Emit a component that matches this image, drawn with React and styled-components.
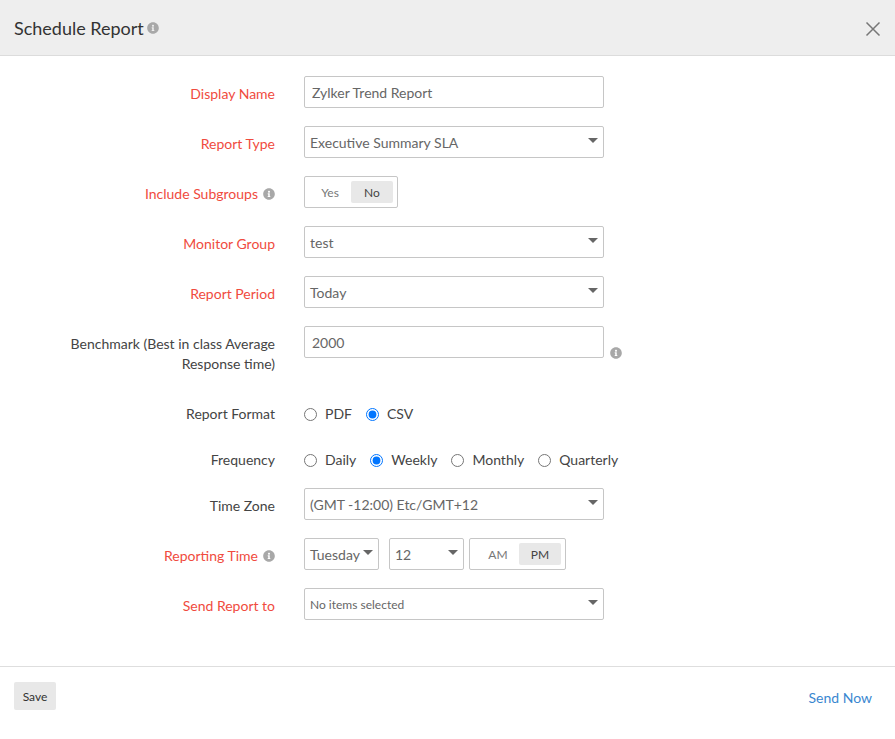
import React from "react";
import styled, { createGlobalStyle } from "styled-components";
import { FaInfoCircle } from "react-icons/fa";

const GlobalStyle = createGlobalStyle`
  html, body {
    margin: 0;
    padding: 0;
    background: #fff;
    font-family: "Lato", "Liberation Sans", sans-serif;
  }
`;

const Info = ({ gap }) => (
  <InfoIcon $gap={gap}>
    <FaInfoCircle size={12} />
  </InfoIcon>
);

const Select = ({ value, width, small }) => (
  <SelectBox $width={width} $small={small}>
    <span>{value}</span>
    <Caret />
  </SelectBox>
);

const Toggle = ({ options, active, width }) => (
  <ToggleBox $width={width}>
    {options.map((option) => (
      <ToggleOption key={option} $active={option === active}>
        {option}
      </ToggleOption>
    ))}
  </ToggleBox>
);

const Radios = ({ name, options, checked }) => (
  <RadioGroup>
    {options.map((option) => (
      <RadioLabel key={option}>
        <RadioInput
          type="radio"
          name={name}
          defaultChecked={option === checked}
        />
        {option}
      </RadioLabel>
    ))}
  </RadioGroup>
);

export default function App() {
  return (
    <Dialog>
      <GlobalStyle />
      <Header>
        <Title>
          Schedule Report
          <Info gap={3} />
        </Title>
        <CloseIcon viewBox="0 0 16 16">
          <path d="M1.5 1.5L14.5 14.5M14.5 1.5L1.5 14.5" />
        </CloseIcon>
      </Header>

      <Body>
        <Row>
          <Label $required>Display Name</Label>
          <TextInput defaultValue="Zylker Trend Report" />
        </Row>
        <Row>
          <Label $required>Report Type</Label>
          <Select value="Executive Summary SLA" />
        </Row>
        <Row>
          <Label $required>
            Include Subgroups
            <Info gap={5} />
          </Label>
          <Toggle options={["Yes", "No"]} active="No" width={94} />
        </Row>
        <Row>
          <Label $required>Monitor Group</Label>
          <Select value="test" />
        </Row>
        <Row>
          <Label $required>Report Period</Label>
          <Select value="Today" />
        </Row>
        <Row>
          <Label $tall>Benchmark (Best in class Average Response time)</Label>
          <TextInput defaultValue="2000" />
          <Info gap={6} />
        </Row>
        <Row>
          <Label>Report Format</Label>
          <Radios name="format" options={["PDF", "CSV"]} checked="CSV" />
        </Row>
        <Row>
          <Label>Frequency</Label>
          <Radios
            name="frequency"
            options={["Daily", "Weekly", "Monthly", "Quarterly"]}
            checked="Weekly"
          />
        </Row>
        <Row>
          <Label>Time Zone</Label>
          <Select value="(GMT -12:00) Etc/GMT+12" />
        </Row>
        <Row>
          <Label $required>
            Reporting Time
            <Info gap={5} />
          </Label>
          <Select value="Tuesday" width={75} />
          <Spacer $width={10} />
          <Select value="12" width={75} />
          <Spacer $width={5} />
          <Toggle options={["AM", "PM"]} active="PM" width={97} />
        </Row>
        <Row>
          <Label $required>Send Report to</Label>
          <Select value="No items selected" small />
        </Row>
      </Body>

      <Footer>
        <SaveButton>Save</SaveButton>
        <SendNow href="#">Send Now</SendNow>
      </Footer>
    </Dialog>
  );
}

const Dialog = styled.div`
  width: 895px;
  height: 739px;
  display: flex;
  flex-direction: column;
  overflow: hidden;
  background: #fff;
  color: #444;
  font-size: 14px;
`;

const Header = styled.div`
  height: 55px;
  flex-shrink: 0;
  display: flex;
  align-items: center;
  justify-content: space-between;
  padding: 0 14px;
  background: #eeeeee;
  border-bottom: 1px solid #dcdcdc;
`;

const Title = styled.div`
  display: flex;
  align-items: center;
  font-size: 18px;
  color: #333;
`;

const CloseIcon = styled.svg`
  width: 16px;
  height: 16px;
  margin-top: 2px;
  fill: none;
  stroke: #777;
  stroke-width: 1.5;
`;

const InfoIcon = styled.span`
  display: inline-flex;
  margin-left: ${(props) => props.$gap}px;
  color: #a8a8a8;
  align-self: center;
`;

const Body = styled.div`
  flex: 1;
  padding-top: 20px;
`;

const Row = styled.div`
  display: flex;
  align-items: ${(props) => props.$align || "flex-start"};
  margin-bottom: 18px;

  > ${InfoIcon} {
    align-self: center;
    margin-top: 2px;
  }
`;

const Label = styled.div`
  box-sizing: border-box;
  width: 275px;
  flex-shrink: 0;
  margin-right: 29px;
  padding: 8px 0 ${(props) => (props.$tall ? "4px" : "0")} 60px;
  display: flex;
  justify-content: flex-end;
  align-items: center;
  min-height: 28px;
  line-height: 20px;
  text-align: right;
  color: ${(props) => (props.$required ? "#f04b3e" : "#444")};
`;

const TextInput = styled.input`
  box-sizing: border-box;
  width: 300px;
  height: 32px;
  padding: 0 7px;
  border: 1px solid #c6c6c6;
  border-radius: 2px;
  outline: none;
  font-family: inherit;
  font-size: 14px;
  color: #666;
`;

const SelectBox = styled.div`
  box-sizing: border-box;
  width: ${(props) => props.$width || 300}px;
  height: 32px;
  padding: 0 5px;
  display: flex;
  align-items: center;
  justify-content: space-between;
  border: 1px solid #c6c6c6;
  border-radius: 2px;
  font-size: ${(props) => (props.$small ? "12px" : "14px")};
  color: #666;
`;

const Caret = styled.i`
  width: 0;
  height: 0;
  margin-top: -3px;
  border-left: 5px solid transparent;
  border-right: 5px solid transparent;
  border-top: 5px solid #666;
`;

const Spacer = styled.div`
  width: ${(props) => props.$width}px;
  flex-shrink: 0;
`;

const ToggleBox = styled.div`
  box-sizing: border-box;
  width: ${(props) => props.$width}px;
  height: 32px;
  padding: 4px;
  display: flex;
  justify-content: flex-end;
  border: 1px solid #c6c6c6;
  border-radius: 2px;
  font-size: 12px;
`;

const ToggleOption = styled.div`
  width: 42px;
  height: 22px;
  display: flex;
  align-items: center;
  justify-content: center;
  border-radius: 2px;
  background: ${(props) => (props.$active ? "#e8e8e8" : "transparent")};
  color: ${(props) => (props.$active ? "#444" : "#777")};
`;

const RadioGroup = styled.div`
  display: flex;
  gap: 14px;
  padding-top: 8px;
  line-height: 20px;
`;

const RadioLabel = styled.label`
  display: flex;
  align-items: center;
  color: #444;
`;

const RadioInput = styled.input`
  width: 13px;
  height: 13px;
  margin: 0 8px 0 0;
`;

const Footer = styled.div`
  height: 57px;
  flex-shrink: 0;
  display: flex;
  align-items: flex-start;
  justify-content: space-between;
  padding: 15px 23px 0 14px;
  border-top: 1px solid #dedede;
`;

const SaveButton = styled.button`
  width: 42px;
  height: 28px;
  padding: 0;
  border: none;
  border-radius: 2px;
  background: #e8e8e8;
  font-family: inherit;
  font-size: 12px;
  color: #333;
`;

const SendNow = styled.a`
  margin-top: 6px;
  line-height: 20px;
  color: #3a87d0;
  text-decoration: none;
`;
